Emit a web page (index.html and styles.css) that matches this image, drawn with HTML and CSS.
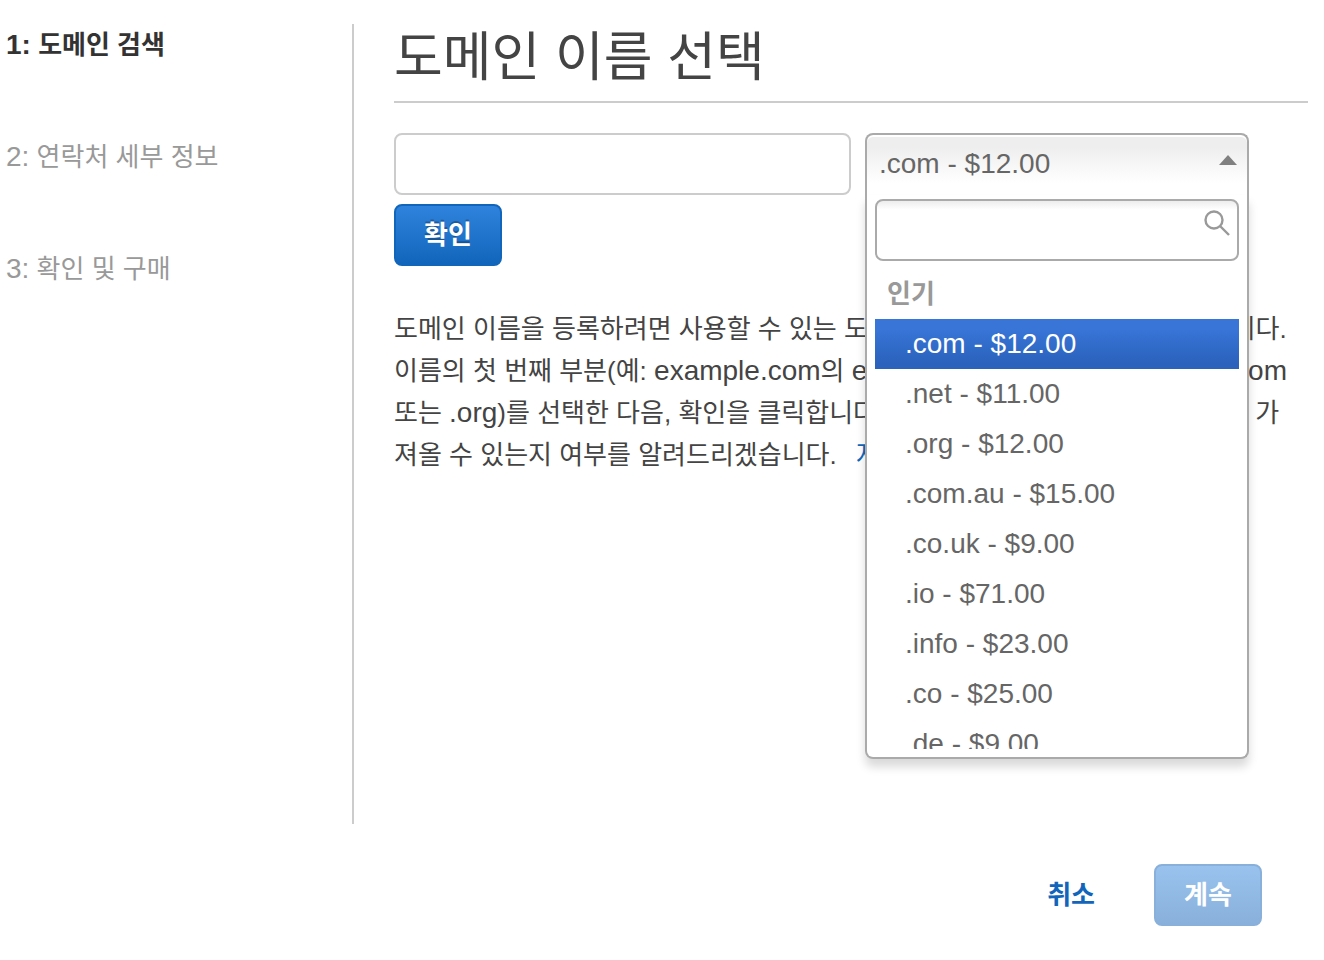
FILE: index.html
```html
<!DOCTYPE html>
<html lang="ko">
<head>
<meta charset="utf-8">
<meta name="viewport" content="width=device-width, initial-scale=1">
<title>도메인 이름 선택</title>
<link rel="stylesheet" href="styles.css">
</head>
<body>

<div class="wizard">
  <ol class="steps">
    <li class="step active"><span class="num">1:</span> 도메인 검색</li>
    <li class="step"><span class="num">2:</span> 연락처 세부 정보</li>
    <li class="step"><span class="num">3:</span> 확인 및 구매</li>
  </ol>

  <main class="content">
    <h1>도메인 이름 선택</h1>

    <form class="search-form">
      <input class="domain-name" type="text" name="domain" aria-label="도메인 이름">

      <div class="chosen">
        <select class="chosen-single" name="tld" aria-label="최상위 도메인">
          <option>.com - $12.00</option>
          <option>.net - $11.00</option>
          <option>.org - $12.00</option>
        </select>
        <svg class="arrow" viewBox="0 0 18 10" aria-hidden="true"><path d="M9 0 L18 10 H0 Z"/></svg>

        <div class="chosen-drop">
          <div class="chosen-search">
            <input type="text" name="filter" aria-label="검색">
            <svg class="lens" viewBox="0 0 26 26" aria-hidden="true">
              <circle cx="10" cy="10" r="8.5"/>
              <path d="M16 16 L25 25"/>
            </svg>
          </div>
          <ul class="chosen-results" role="listbox" aria-label="최상위 도메인">
            <li class="group" role="presentation">인기</li>
            <li class="option highlighted" role="option" aria-selected="true">.com - $12.00</li>
            <li class="option" role="option">.net - $11.00</li>
            <li class="option" role="option">.org - $12.00</li>
            <li class="option" role="option">.com.au - $15.00</li>
            <li class="option" role="option">.co.uk - $9.00</li>
            <li class="option" role="option">.io - $71.00</li>
            <li class="option" role="option">.info - $23.00</li>
            <li class="option" role="option">.co - $25.00</li>
            <li class="option" role="option">.de - $9.00</li>
          </ul>
        </div>
      </div>

      <button class="btn" type="submit">확인</button>
    </form>

    <p class="help">도메인 이름을 등록하려면 사용할 수 있는 도메인 이름을 찾는 작업부터 시작합니다.<br>
      이름의 첫 번째 부분(예: <span class="latin">example.com</span>의 <span class="latin">example</span>)을 입력한 후 확장자(예: <span class="latin">.com</span><br>
      또는 <span class="latin">.org</span>)를 선택한 다음, 확인을 클릭합니다. 그러면 도메인을 사용자 이름으로 가<br>져올 수 있는지 여부를 알려드리겠습니다.
      <a class="more" href="#">자세히 알아보기</a></p>
  </main>
</div>

<div class="actions">
  <a class="cancel" href="#">취소</a>
  <button class="btn" type="button" disabled>계속</button>
</div>

</body>
</html>
```

FILE: styles.css
```css
* {
  box-sizing: border-box;
}

body {
  margin: 0;
  padding: 24px 16px 24px 0;
  background: #fff;
  color: #444;
  font: 26px/42px "Liberation Sans", "Noto Sans CJK KR", sans-serif;
}

input,
select,
button {
  font: inherit;
}

.wizard {
  display: flex;
}

/* left steps */
.steps {
  flex: 0 0 352px;
  margin: 0;
  padding: 0 0 0 6px;
  list-style: none;
}

.step {
  margin-bottom: 70px;
  color: #999;
}

.step.active {
  color: #333;
  font-weight: bold;
}

.num,
.latin {
  font-size: 28px;
  line-height: 28px;
}

/* right side */
.content {
  flex: 1;
  min-width: 0;
  min-height: 800px;
  padding-left: 40px;
  border-left: 2px solid #ccc;
}

h1 {
  margin: 0 0 30px;
  padding: 2px 0 11px;
  border-bottom: 2px solid #ccc;
  font-size: 53px;
  font-weight: normal;
  line-height: 64px;
}

.search-form {
  display: flex;
  flex-wrap: wrap;
  gap: 9px 14px;
}

.domain-name {
  width: 50%;
  height: 62px;
  padding: 0 12px;
  border: 2px solid #ccc;
  border-radius: 8px;
}

.btn {
  width: 108px;
  height: 62px;
  padding: 0;
  border: 2px solid #1166bb;
  border-radius: 8px;
  background: linear-gradient(#3083dc, #1166bb);
  color: #fff;
  font-weight: bold;
  text-shadow: 0 -2px 0 rgba(0, 0, 0, .25);
}

.btn:disabled {
  border-color: #88b0da;
  background: linear-gradient(#99c2ee, #88b0da);
  text-shadow: none;
}

/* extension drop-down, open */
.chosen {
  position: relative;
  width: 42%;
  font-size: 28px;
}

.chosen-single {
  display: block;
  width: 100%;
  height: 62px;
  padding: 0 36px 2px 12px;
  border: 2px solid #aaa;
  border-bottom: 0;
  border-radius: 8px 8px 0 0;
  background: linear-gradient(#eee 20%, #fff 80%);
  box-shadow: inset 0 2px 0 #fff;
  color: #666;
  appearance: none;
}

.arrow {
  position: absolute;
  top: 22px;
  right: 12px;
  width: 18px;
  height: 10px;
  fill: #808080;
}

.chosen-drop {
  position: absolute;
  top: 100%;
  left: 0;
  z-index: 10;
  width: 100%;
  padding: 4px 8px 8px;
  border: 2px solid #aaa;
  border-top: 0;
  border-radius: 0 0 8px 8px;
  background: #fff;
  box-shadow: 0 8px 10px rgba(0, 0, 0, .15);
  color: #666;
}

.chosen-search {
  position: relative;
  margin-bottom: 8px;
}

.chosen-search input {
  display: block;
  width: 100%;
  height: 62px;
  padding: 0 44px 0 12px;
  border: 2px solid #aaa;
  border-radius: 8px;
  background: linear-gradient(#eee 1%, #fff 15%);
}

.lens {
  position: absolute;
  top: 11px;
  right: 9px;
  width: 26px;
  height: 26px;
  fill: none;
  stroke: #999;
  stroke-width: 2.4;
}

.chosen-results {
  max-height: 480px;
  margin: 0;
  padding: 0;
  overflow: auto;
  scrollbar-width: none;
  list-style: none;
}

.chosen-results li {
  height: 50px;
  line-height: 50px;
}

.chosen-results .group {
  padding-left: 12px;
  color: #999;
  font-size: 26px;
  font-weight: bold;
}

.chosen-results .option {
  padding-left: 30px;
}

.chosen-results .highlighted {
  background: linear-gradient(#3875d7 20%, #2a62bc 90%);
  color: #fff;
}

.help {
  margin: 42px 0 0;
}

.more {
  margin-left: 12px;
  color: #1166bb;
  text-decoration: none;
}

.actions {
  display: flex;
  justify-content: flex-end;
  align-items: center;
  gap: 59px;
  margin-top: 40px;
  padding-right: 46px;
}

.cancel {
  color: #1166bb;
  font-weight: bold;
  text-decoration: none;
}
```
